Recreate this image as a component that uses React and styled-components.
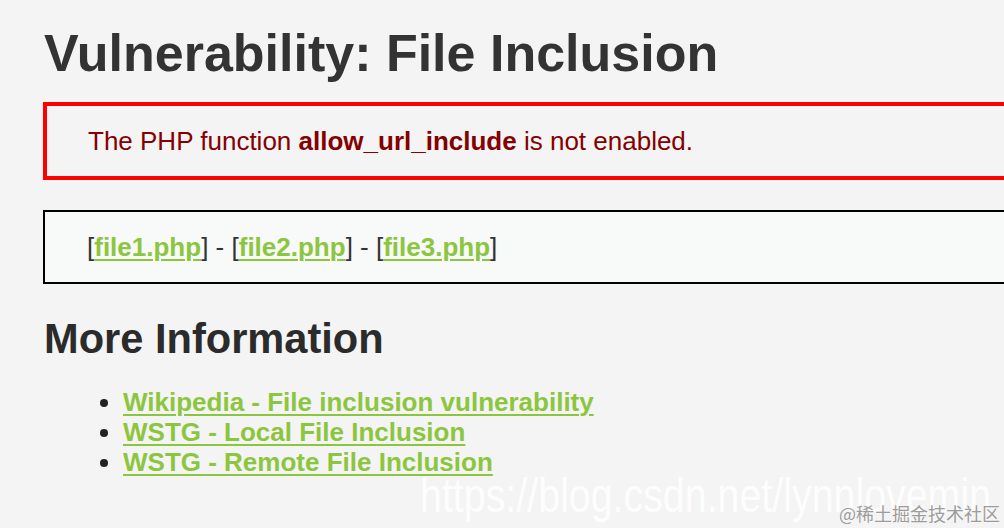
import React from 'react';
import styled, { createGlobalStyle } from 'styled-components';

const GlobalStyle = createGlobalStyle`
  html, body {
    margin: 0;
    padding: 0;
    background: #f4f4f4;
    overflow: hidden;
  }
  body {
    font-family: "Liberation Sans", Arial, sans-serif;
  }
`;

const Page = styled.main`
  position: relative;
  width: 1004px;
  height: 528px;
  padding: 23px 0 0 44px;
  box-sizing: border-box;
  overflow: hidden;
  color: #2f2f2f;
`;

const Title = styled.h1`
  margin: 0 0 19px;
  font-size: 52px;
  line-height: 60px;
  font-weight: bold;
  color: #333;
`;

const Box = styled.div`
  width: 1100px;
  box-sizing: border-box;
  line-height: 70px;
  font-size: 26px;
  border: ${p => p.$warn ? '4px solid #ff0000' : '2px solid #000'};
  background: ${p => p.$warn ? '#f4f4f4' : '#f8f9f9'};
  color: ${p => p.$warn ? '#850000' : '#333'};
  padding-left: ${p => p.$warn ? '41px' : '42px'};
  margin-bottom: 30px;
  margin-left: -1px;
`;

const Link = styled.a`
  color: #8cc63e;
  font-weight: bold;
  text-decoration: underline;
  text-decoration-thickness: 2px;
  text-underline-offset: 3px;
`;

const SubTitle = styled.h2`
  margin: 31px 0 24px;
  font-size: 41.6px;
  line-height: 48px;
  font-weight: bold;
  color: #2b2b2b;
`;

const List = styled.ul`
  margin: 0;
  padding-left: 79px;
  font-size: 26px;
  line-height: 30px;
  color: #222;
`;

const Watermark = styled.div`
  position: absolute;
  left: 420px;
  top: 468px;
  font-size: 48px;
  line-height: 56px;
  color: rgba(255, 255, 255, 0.85);
  transform: scaleX(0.82);
  transform-origin: left top;
  white-space: nowrap;
`;

const Brand = styled.div`
  position: absolute;
  right: 4px;
  bottom: 4px;
  font-family: "Noto Sans CJK SC", sans-serif;
  font-size: 18px;
  line-height: 22px;
  color: #9c9c9c;
  text-shadow: 0 0 2px #fff;
`;

const files = ['file1.php', 'file2.php', 'file3.php'];

const links = [
  'Wikipedia - File inclusion vulnerability',
  'WSTG - Local File Inclusion',
  'WSTG - Remote File Inclusion',
];

export default function App() {
  return (
    <>
      <GlobalStyle />
      <Page>
        <Title>Vulnerability: File Inclusion</Title>
        <Box $warn>
          The PHP function <b>allow_url_include</b> is not enabled.
        </Box>
        <Box>
          {files.map((f, i) => (
            <React.Fragment key={f}>
              {i > 0 && ' - '}[<Link href="#">{f}</Link>]
            </React.Fragment>
          ))}
        </Box>
        <SubTitle>More Information</SubTitle>
        <List>
          {links.map(l => (
            <li key={l}><Link href="#">{l}</Link></li>
          ))}
        </List>
        <Watermark>https://blog.csdn.net/lynnlovemin</Watermark>
        <Brand>@稀土掘金技术社区</Brand>
      </Page>
    </>
  );
}
